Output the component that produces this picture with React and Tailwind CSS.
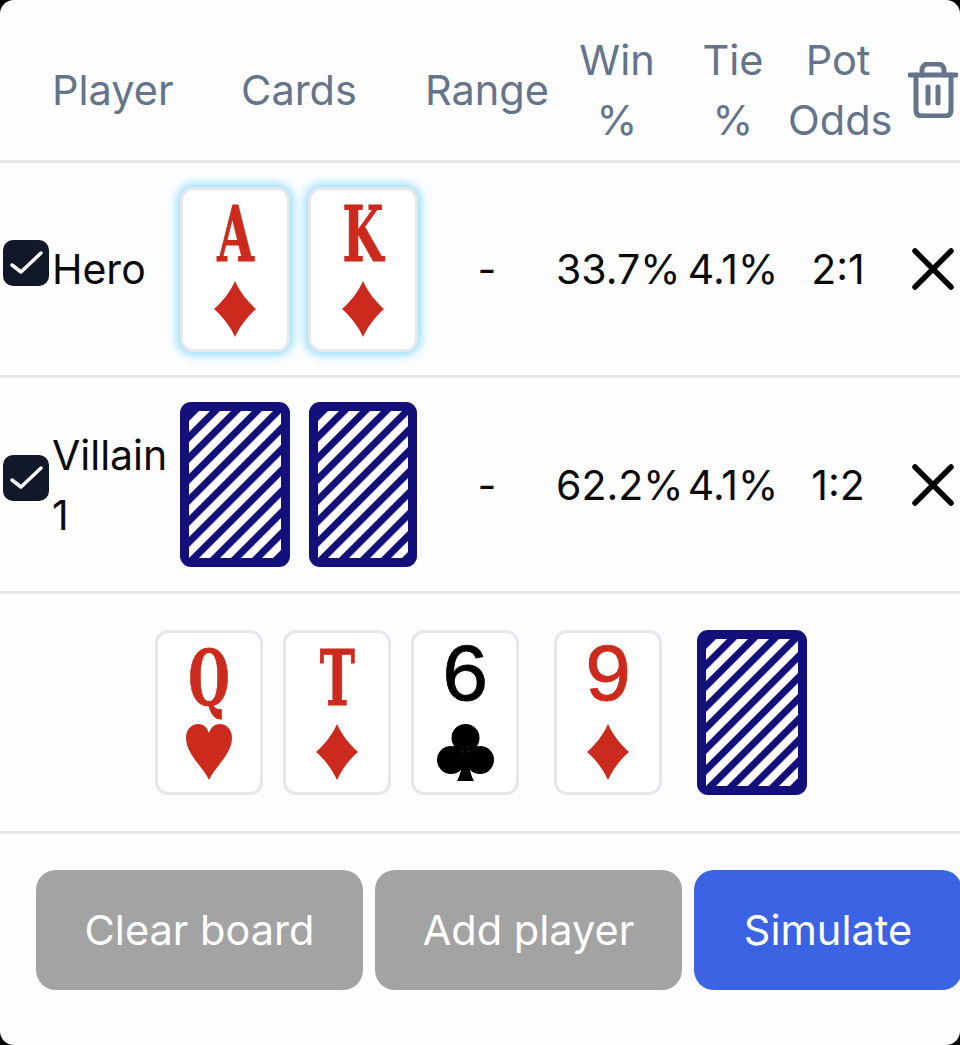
import React from "react";

const RED = "#cc2a1c";

function Suit({ suit }) {
  if (suit === "d") {
    return (
      <svg viewBox="0 0 42 56" className="w-[42px] h-[56px]">
        <path d="M21 0C26 11 33 20 42 28C33 36 26 45 21 56C16 45 9 36 0 28C9 20 16 11 21 0Z" fill={RED} />
      </svg>
    );
  }
  if (suit === "h") {
    return (
      <svg viewBox="0 0 46 56" className="w-[46px] h-[56px]">
        <path d="M23 56C18 44 0 30 0 14C0 5 6 0 12 0C17 0 21 3 23 9C25 3 29 0 34 0C40 0 46 5 46 14C46 30 28 44 23 56Z" fill={RED} />
      </svg>
    );
  }
  return (
    <svg viewBox="0 0 57 57" className="w-[57px] h-[57px]">
      <circle cx="28.5" cy="14" r="14" fill="#000" />
      <circle cx="14" cy="36" r="14" fill="#000" />
      <circle cx="43" cy="36" r="14" fill="#000" />
      <path d="M26 24H31C31 40 33 50 37 57H20C24 50 26 40 26 24Z" fill="#000" />
    </svg>
  );
}

function Card({ rank, suit, glow, width = "w-[110px]", serif = true }) {
  const color = suit === "c" ? "text-black" : "text-[#cc2a1c]";
  return (
    <div
      className={`${width} h-[165px] shrink-0 rounded-[13px] border-[3px] border-[#e5e7eb] bg-white flex flex-col items-center ${
        glow ? "shadow-[0_0_10px_3px_#8fdcfb]" : ""
      }`}
    >
      <div
        className={`h-[91px] flex items-center justify-center leading-none ${color} ${
          serif
            ? "font-['DejaVu_Serif',serif] font-bold text-[76px] scale-x-[0.62] [-webkit-text-stroke:1px_currentColor]"
            : "font-['Liberation_Mono',monospace] text-[82px] [-webkit-text-stroke:0.8px_currentColor]"
        }`}
      >
        {rank}
      </div>
      <Suit suit={suit} />
    </div>
  );
}

function CardBack({ id, width = "w-[110px]" }) {
  return (
    <div className={`${width} h-[165px] shrink-0 rounded-[11px] bg-[#13107a] p-[9px]`}>
      <svg width="100%" height="100%" className="block">
        <defs>
          <pattern id={id} width="14.85" height="14.85" patternUnits="userSpaceOnUse" patternTransform="rotate(-45)">
            <rect width="14.85" height="14.85" fill="#fff" />
            <rect width="14.85" height="7.07" fill="#13107a" />
          </pattern>
        </defs>
        <rect width="100%" height="100%" fill={`url(#${id})`} />
      </svg>
    </div>
  );
}

function Checkbox() {
  return (
    <div className="ml-[3px] mb-[13px] w-[46px] h-[46px] rounded-[10px] bg-[#111827] flex items-center justify-center">
      <svg viewBox="0 0 46 46" className="w-[46px] h-[46px]" fill="none" stroke="#fff" strokeWidth="3.5" strokeLinecap="round" strokeLinejoin="round">
        <path d="M9 25L18 32L38 13" />
      </svg>
    </div>
  );
}

function CloseIcon() {
  return (
    <svg viewBox="0 0 42 42" className="w-[42px] h-[42px]" fill="none" stroke="#000" strokeWidth="5.5" strokeLinecap="round">
      <path d="M3 3L39 39M39 3L3 39" />
    </svg>
  );
}

function TrashIcon() {
  return (
    <svg viewBox="0 0 50 56" className="w-[50px] h-[56px]" fill="none" stroke="#64748b" strokeWidth="5" strokeLinecap="round" strokeLinejoin="round">
      <path d="M2 13H48" />
      <path d="M14 13V8C14 4 17 2 20 2H30C33 2 36 4 36 8V13" />
      <path d="M8 13V48C8 52 10 54 14 54H37C41 54 43 52 43 48V13" />
      <path d="M20 25V41M30 25V41" />
    </svg>
  );
}

const gridCols = "grid grid-cols-[52px_128px_238px_138px_122px_110px_100px_72px]";

function PlayerRow({ name, win, tie, odds, gap, height, children }) {
  return (
    <div className={`${gridCols} ${height} items-center border-b-[3px] border-[#e5e7eb] text-[#0a0a0a] text-[41px]`}>
      <Checkbox />
      <div className="leading-[60px]">{name}</div>
      <div className={`flex items-center ${gap}`}>{children}</div>
      <div className="text-center">-</div>
      <div className="text-center">{win}</div>
      <div className="text-center">{tie}</div>
      <div className="text-center">{odds}</div>
      <div className="pl-[24px] flex"><CloseIcon /></div>
    </div>
  );
}

function App() {
  return (
    <div className="w-[960px] h-[1045px] bg-black overflow-hidden">
      <div className="w-[960px] h-[1045px] rounded-[14px] overflow-hidden bg-[#fdfdfe] text-[41.5px] leading-[60px] font-['Inter',sans-serif]">
        {/* Header */}
        <div className={`${gridCols} h-[163px] pt-[20px] items-center border-b-[3px] border-[#e5e7eb] text-[#64748b] text-center`}>
          <div />
          <div className="text-left">Player</div>
          <div>Cards</div>
          <div>Range</div>
          <div>Win<br />%</div>
          <div>Tie<br />%</div>
          <div>Pot<br />Odds</div>
          <div className="pl-[20px] flex"><TrashIcon /></div>
        </div>

        <PlayerRow name="Hero" win="33.7%" tie="4.1%" odds="2:1" gap="gap-[18px]" height="h-[215px]">
          <Card rank="A" suit="d" glow />
          <Card rank="K" suit="d" glow />
        </PlayerRow>

        <PlayerRow name="Villain 1" win="62.2%" tie="4.1%" odds="1:2" gap="gap-[19px]" height="h-[216px]">
          <CardBack id="v1" />
          <CardBack id="v2" width="w-[108px]" />
        </PlayerRow>

        {/* Board */}
        <div className="h-[240px] pl-[155px] flex items-center border-b-[3px] border-[#e5e7eb]">
          <Card rank="Q" suit="h" width="w-[108px]" />
          <div className="ml-[20px]"><Card rank="T" suit="d" width="w-[108px]" /></div>
          <div className="ml-[20px]"><Card rank="6" suit="c" width="w-[108px]" serif={false} /></div>
          <div className="ml-[35px]"><Card rank="9" suit="d" width="w-[108px]" serif={false} /></div>
          <div className="ml-[35px]"><CardBack id="b1" /></div>
        </div>

        {/* Buttons */}
        <div className="flex gap-[12px] pl-[36px] pt-[36px] text-white">
          <button className="w-[327px] h-[120px] shrink-0 rounded-[20px] bg-[#a3a3a3]">Clear board</button>
          <button className="w-[307px] h-[120px] shrink-0 rounded-[20px] bg-[#a3a3a3]">Add player</button>
          <button className="w-[268px] h-[120px] shrink-0 rounded-[20px] bg-[#3b63e3]">Simulate</button>
        </div>
      </div>
    </div>
  );
}

export default App;
